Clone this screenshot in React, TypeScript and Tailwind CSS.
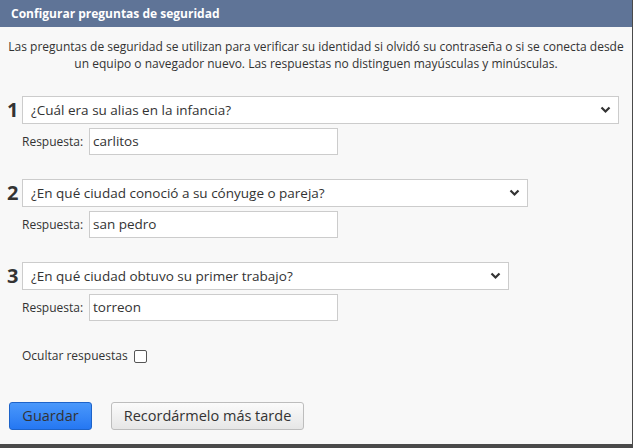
import React from 'react'

const font = { fontFamily: '"Open Sans", "Noto Sans", sans-serif' }

function Chevron() {
  return (
    <svg width="11" height="8" viewBox="0 0 11 8" className="shrink-0">
      <path d="M1.5 1.5 L5.5 5.5 L9.5 1.5" fill="none" stroke="#333" strokeWidth="2.2" />
    </svg>
  )
}

function Question({ n, text, answer, width }: { n: number; text: string; answer: string; width: string }) {
  return (
    <div className="flex flex-col">
      <div className="flex items-center">
        <div className="w-[22px] pl-[7px] text-[20px] font-bold leading-none text-[#333]">{n}</div>
        <div className={`flex h-[28px] items-center justify-between border border-[#cccccc] bg-white pl-[8px] pr-[7px] text-[13.5px] text-[#333] ${width}`}>
          <span>{text}</span>
          <Chevron />
        </div>
      </div>
      <div className="mt-[4px] flex items-center pl-[22px]">
        <span className="w-[67px] text-[12px] text-[#333]">Respuesta:</span>
        <div className="flex h-[27px] w-[249px] items-center border border-[#cccccc] bg-white pl-[3px] text-[13.5px] text-[#333]">
          {answer}
        </div>
      </div>
    </div>
  )
}

export default function App() {
  return (
    <div className="h-[448px] w-[633px] overflow-hidden bg-[#4a4a4a]" style={font}>
      <div className="flex h-[444px] w-[632px] flex-col bg-[#f8f8f8]">
        <div className="flex h-[27px] items-center bg-[#5f7497] pl-[11px] text-[12px] font-bold text-white">
          Configurar preguntas de seguridad
        </div>
        <p className="mt-[11px] px-[2px] text-center text-[12px] leading-[17px] text-[#333]">
          Las preguntas de seguridad se utilizan para verificar su identidad si olvidó su contraseña o si se conecta desde un equipo o navegador nuevo. Las respuestas no distinguen mayúsculas y minúsculas.
        </p>
        <div className="mt-[24px] flex flex-col gap-[24px]">
          <Question n={1} text="¿Cuál era su alias en la infancia?" answer="carlitos" width="w-[597px]" />
          <Question n={2} text="¿En qué ciudad conoció a su cónyuge o pareja?" answer="san pedro" width="w-[506px]" />
          <Question n={3} text="¿En qué ciudad obtuvo su primer trabajo?" answer="torreon" width="w-[487px]" />
        </div>
        <div className="mt-[26px] flex items-center pl-[22px] text-[12px] text-[#333]">
          <span>Ocultar respuestas</span>
          <span className="ml-[6px] inline-block h-[13px] w-[13px] rounded-[2px] border border-[#555] bg-white" />
        </div>
        <div className="mt-[37px] flex items-center gap-[19px] pl-[9px]">
          <button className="h-[28px] w-[83px] rounded-[3px] border border-[#1d63c9] bg-gradient-to-b from-[#4a98fb] to-[#2577f2] text-[14.5px] text-[#333]">
            Guardar
          </button>
          <button className="h-[28px] w-[193px] rounded-[3px] border border-[#bdbdbd] bg-gradient-to-b from-[#fbfbfb] to-[#e6e6e6] text-[14.5px] text-[#333]">
            Recordármelo más tarde
          </button>
        </div>
      </div>
    </div>
  )
}
